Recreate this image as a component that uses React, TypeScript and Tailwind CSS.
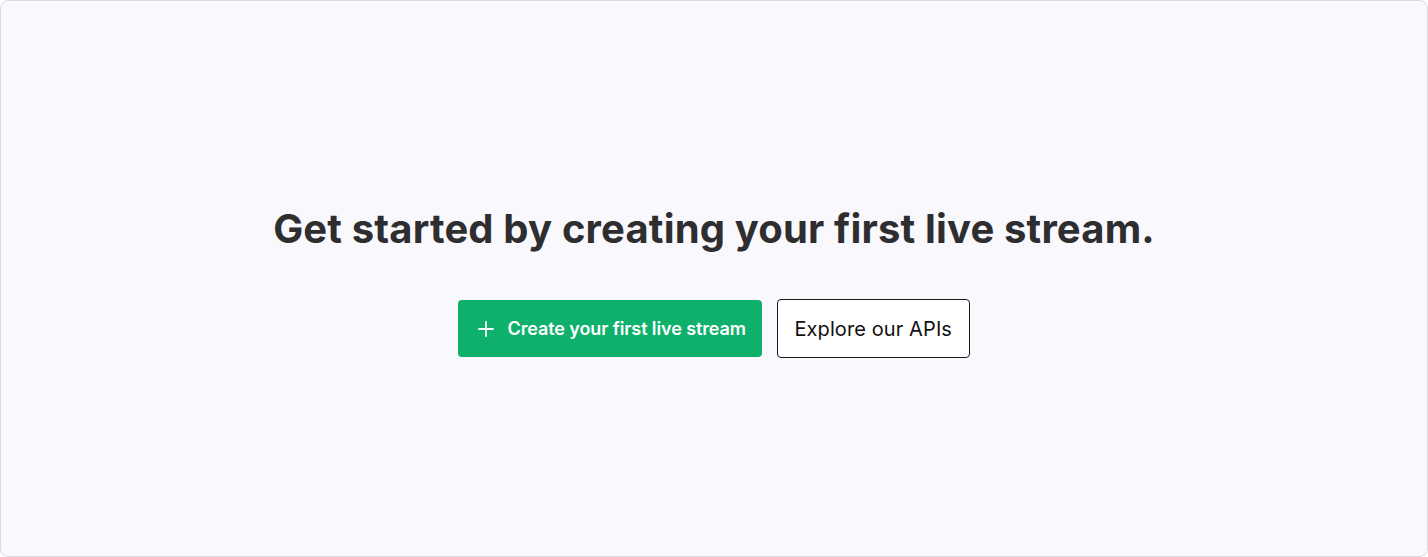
import React from "react";

export default function App() {
  return (
    <div className="h-[557px] w-[1428px] bg-white" style={{ fontFamily: "Inter, 'Noto Sans', sans-serif" }}>
      <div className="flex h-full w-full flex-col items-center justify-center rounded-lg border border-[#d9dbe0] bg-[#f9f8fc] pt-[6px]">
        <h1 className="text-[40px] font-bold leading-[48px] tracking-[0.16px] text-[#2e2e30]">
          Get started by creating your first live stream.
        </h1>
        <div className="mt-[46px] flex items-center gap-[15px]">
          <button className="flex h-[57px] items-center gap-[13px] rounded-[4px] bg-[#0db16b] pl-[20px] pr-[16px] text-[18px] font-semibold tracking-[-0.1px] text-white">
            <svg width="16" height="16" viewBox="0 0 16 16" fill="none" stroke="currentColor" strokeWidth="1.8" strokeLinecap="round">
              <path d="M8 1v14M1 8h14" />
            </svg>
            Create your first live stream
          </button>
          <button className="flex h-[59px] items-center rounded-[4px] border border-[#1b1b1b] bg-white px-[16.5px] text-[20px] tracking-[0.1px] text-[#111]">
            Explore our APIs
          </button>
        </div>
      </div>
    </div>
  );
}
